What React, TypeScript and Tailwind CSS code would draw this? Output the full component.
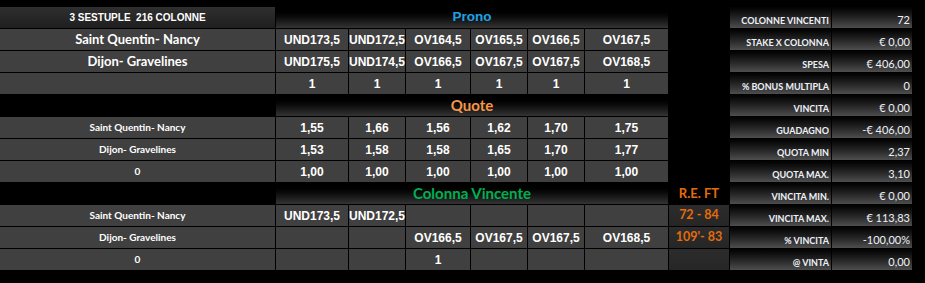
import React from 'react';

const arial = "font-['Liberation_Sans',Arial,sans-serif]";
const cal = "font-['Lato','Open_Sans',sans-serif]";

const cell = 'bg-[#404040] flex items-center justify-center text-white whitespace-nowrap';
const head = 'bg-linear-to-b from-black to-[#343434] flex items-center justify-center';
const side = 'bg-linear-to-b from-[#030303] to-[#4e4e4e] flex items-end justify-end pb-[3px] pr-[2px] text-[#eef2f8] leading-none whitespace-nowrap';

const prono = [
  ['UND173,5', 'UND172,5', 'OV164,5', 'OV165,5', 'OV166,5', 'OV167,5'],
  ['UND175,5', 'UND174,5', 'OV166,5', 'OV167,5', 'OV167,5', 'OV168,5'],
  ['1', '1', '1', '1', '1', '1'],
];

const quote = [
  ['1,55', '1,66', '1,56', '1,62', '1,70', '1,75'],
  ['1,53', '1,58', '1,58', '1,65', '1,70', '1,77'],
  ['1,00', '1,00', '1,00', '1,00', '1,00', '1,00'],
];

const vincente = [
  ['UND173,5', 'UND172,5', '', '', '', ''],
  ['', '', 'OV166,5', 'OV167,5', 'OV167,5', 'OV168,5'],
  ['', '', '1', '', '', ''],
];

const stats: [string, string][] = [
  ['COLONNE VINCENTI', '72'],
  ['STAKE X COLONNA', '€ 0,00'],
  ['SPESA', '€ 406,00'],
  ['% BONUS MULTIPLA', '0'],
  ['VINCITA', '€ 0,00'],
  ['GUADAGNO', '-€ 406,00'],
  ['QUOTA MIN', '2,37'],
  ['QUOTA MAX.', '3,10'],
  ['VINCITA MIN.', '€ 0,00'],
  ['VINCITA MAX.', '€ 113,83'],
  ['% VINCITA', '-100,00%'],
  ['@ VINTA', '0,00'],
];

const names = ['Saint Quentin- Nancy', 'Dijon- Gravelines', '0'];

function StatCells({ row }: { row: number }) {
  const [label, value] = stats[row];
  return (
    <>
      <div className={`${side} ${cal} font-bold text-[9px]`}>{label}</div>
      <div className={`${side} ${cal} text-[11px] pb-[2px]`}>{value}</div>
    </>
  );
}

export default function App() {
  return (
    <div className="w-[925px] h-[283px] bg-black overflow-hidden">
      <div className="grid grid-cols-[275px_72px_56px_64px_56px_56px_83px_60px_101px_80px] grid-rows-[repeat(12,21px)] gap-px pt-[7px]">
        {/* Prono */}
        <div className={`bg-linear-to-b from-[#2f2f2f] to-[#1f1f1f] flex items-center justify-center text-white ${arial} font-bold text-[10px]`}>
          3 SESTUPLE&nbsp;&nbsp;216 COLONNE
        </div>
        <div className={`${head} col-span-6 ${arial} font-bold text-[13.5px] text-[#1ea2e4]`}>Prono</div>
        <div />
        <StatCells row={0} />

        {prono.map((r, i) => (
          <React.Fragment key={'p' + i}>
            <div className={`${cell} ${cal} font-bold text-[13px]`}>{i < 2 ? names[i] : ''}</div>
            {r.map((v, j) => (
              <div key={j} className={`${cell} ${arial} font-bold text-[12px]`}>{v}</div>
            ))}
            <div />
            <StatCells row={i + 1} />
          </React.Fragment>
        ))}

        {/* Quote */}
        <div />
        <div className={`${head} col-span-6 ${cal} font-bold text-[15px] text-[#f79646]`}>Quote</div>
        <div />
        <StatCells row={4} />

        {quote.map((r, i) => (
          <React.Fragment key={'q' + i}>
            <div className={`${cell} ${cal} font-bold text-[10px]`}>{names[i]}</div>
            {r.map((v, j) => (
              <div key={j} className={`${cell} ${arial} font-bold text-[12px]`}>{v}</div>
            ))}
            <div />
            <StatCells row={i + 5} />
          </React.Fragment>
        ))}

        {/* Colonna Vincente */}
        <div />
        <div className={`${head} col-span-6 ${cal} font-bold text-[15px] text-[#00b050]`}>Colonna Vincente</div>
        <div className={`flex items-center justify-center ${cal} font-bold text-[13px] text-[#e46c0a]`}>R.E. FT</div>
        <StatCells row={8} />

        {vincente.map((r, i) => (
          <React.Fragment key={'v' + i}>
            <div className={`${cell} ${cal} font-bold text-[10px]`}>{names[i]}</div>
            {r.map((v, j) => (
              <div key={j} className={`${cell} ${arial} font-bold text-[12px]`}>{v}</div>
            ))}
            <div className={`bg-linear-to-b from-[#2c2c2c] to-[#262626] flex items-center justify-center whitespace-nowrap ${cal} font-bold text-[12.5px] text-[#e46c0a]`}>
              {['72 - 84', "109'- 83", ''][i]}
            </div>
            <StatCells row={i + 9} />
          </React.Fragment>
        ))}
      </div>
    </div>
  );
}
